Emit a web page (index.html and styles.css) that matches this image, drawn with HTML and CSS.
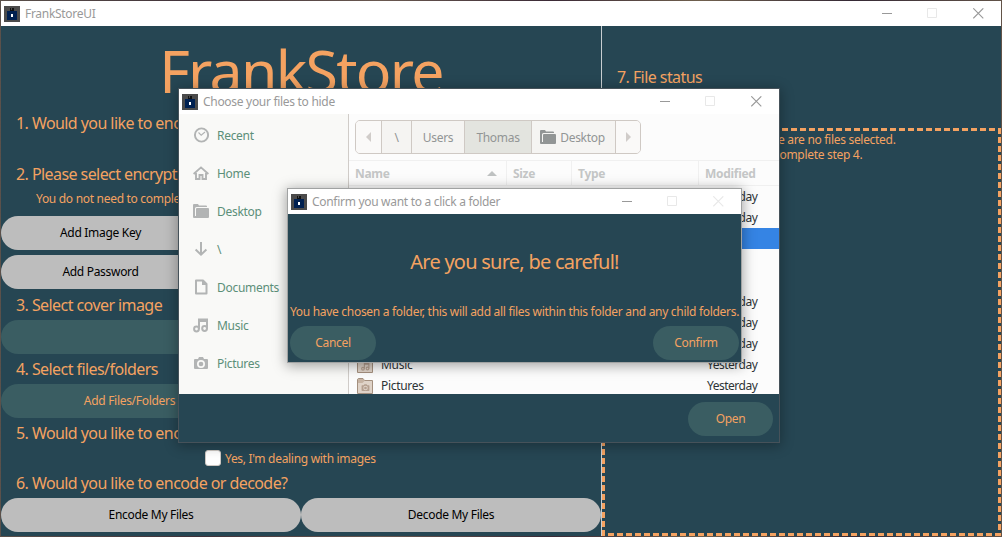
FILE: index.html
```html
<!DOCTYPE html>
<html lang="en">
<head>
<meta charset="utf-8">
<title>FrankStoreUI</title>
<link rel="stylesheet" href="styles.css">
</head>
<body>
<svg class="defs" aria-hidden="true">
  <symbol id="app" viewBox="0 0 16 16" shape-rendering="crispEdges"><path fill="#4b4b4b" d="M0 0h16v16H0z"/><path fill="#111" d="M6 2h1v3H6zM8 2h2v3H8z"/><path fill="#002050" d="M3 5h10v9H3z"/><path fill="#111" d="M6 4h4v1H6z"/><path fill="#fff" d="M7 8h2v3H7z"/></symbol>
  <symbol id="min" viewBox="0 0 11 11"><path d="M0 5.500h10" stroke="currentColor" fill="none"/></symbol>
  <symbol id="max" viewBox="0 0 11 11"><path d="M.5.5h9v9h-9z" stroke="#e8e8e8" fill="none"/></symbol>
  <symbol id="close" viewBox="0 0 11 11"><path d="M.3.3l10 10M10.300.3l-10 10" stroke="currentColor" fill="none" stroke-width="1.1"/></symbol>
  <symbol id="folder" viewBox="0 0 16 16"><path fill="currentColor" d="M0 2q0-1 1-1h4l1 1.500h7q1 0 1 1V4H3.500Q2 4 2 5.500V13h1V6q0-1 1-1h11q1 0 1 1v8q0 1-1 1H1q-1 0-1-1z"/></symbol>
  <symbol id="recent" viewBox="0 0 16 16"><circle cx="8.500" cy="8" r="6.600" fill="none" stroke="currentColor" stroke-width="1.900"/><path d="M5.500 5.500l2.700 2.700L12 5" fill="none" stroke="currentColor" stroke-width="1.100"/></symbol>
  <symbol id="home" viewBox="0 0 16 16"><path d="M.6 9L8 2.400 15.400 9M3 8v6h3.500v-4h3v4H13V8" fill="none" stroke="currentColor" stroke-width="1.900"/></symbol>
  <symbol id="down" viewBox="0 0 16 16"><path d="M8 1v12.500M2.600 8.500L8 13.700l5.400-5.200" fill="none" stroke="currentColor" stroke-width="2"/></symbol>
  <symbol id="doc" viewBox="0 0 16 16"><path d="M3 1.500h7L13.500 5v9.500H3z" fill="none" stroke="currentColor" stroke-width="2" stroke-linejoin="round"/><path d="M9 1l5 5H9z" fill="currentColor"/></symbol>
  <symbol id="music" viewBox="0 0 16 16"><path d="M6 12V2.500h8v9M6 4h8" fill="none" stroke="currentColor" stroke-width="2"/><circle cx="3.500" cy="12" r="2.400" fill="none" stroke="currentColor" stroke-width="2"/><circle cx="11.600" cy="11.500" r="2.400" fill="none" stroke="currentColor" stroke-width="2"/></symbol>
  <symbol id="camera" viewBox="0 0 16 16"><path fill="currentColor" fill-rule="evenodd" d="M2 4h3l1-2h4l1 2h3q1 0 1 1v8q0 1-1 1H2q-1 0-1-1V5q0-1 1-1zM8 5a4 4 0 1 0 0 8 4 4 0 0 0 0-8z"/><circle cx="8" cy="9" r="2.300" fill="currentColor"/></symbol>
  <symbol id="dir" viewBox="0 0 16 16"><path d="M.5 15.500V2q0-1.500 1.500-1.500h4L7.500 2.500h8v13z" fill="#dfd3c8" stroke="#a4907f"/><path d="M1 5V2q0-1 1-1h4l1.500 2-2 2z" fill="#c6b3a3"/></symbol>
</svg>

<main class="window app">
  <header class="bar"><svg class="logo"><use href="#app"/></svg><span>FrankStoreUI</span>
    <div class="ctl"><svg><use href="#min"/></svg><svg><use href="#max"/></svg><svg><use href="#close"/></svg></div></header>
  <div class="panes">
    <section class="steps">
      <h1>FrankStore</h1>
      <h2 class="q first">1. Would you like to encode?</h2>
      <h2 class="q">2. Please select encryption</h2>
      <p class="note">You do not need to complete both</p>
      <div class="btn light third gap6">Add Image Key</div>
      <div class="btn light third gap5">Add Password</div>
      <h2 class="q cover">3. Select cover image</h2>
      <div class="btn gap3"></div>
      <h2 class="q tight">4. Select files/folders</h2>
      <div class="btn half gap3">Add Files/Folders To Hide</div>
      <h2 class="q tight">5. Would you like to encode or decode using images?</h2>
      <label class="check"><i></i><span>Yes, I'm dealing with images</span></label>
      <h2 class="q tight">6. Would you like to encode or decode?</h2>
      <div class="pair gap3"><div class="btn light">Encode My Files</div><div class="btn light">Decode My Files</div></div>
    </section>
    <section class="status">
      <h2 class="q">7. File status</h2>
      <div class="drop"><p>Currently there are no files selected.</p><p>Please complete step 4.</p></div>
    </section>
  </div>
</main>

<section class="window chooser">
  <header class="bar"><svg class="logo"><use href="#app"/></svg><span>Choose your files to hide</span>
    <div class="ctl"><svg><use href="#min"/></svg><svg><use href="#max"/></svg><svg><use href="#close"/></svg></div></header>
  <div class="browse">
    <nav class="places">
      <a><svg><use href="#recent"/></svg>Recent</a>
      <a><svg><use href="#home"/></svg>Home</a>
      <a><svg><use href="#folder"/></svg>Desktop</a>
      <a><svg><use href="#down"/></svg>\</a>
      <a><svg><use href="#doc"/></svg>Documents</a>
      <a><svg><use href="#music"/></svg>Music</a>
      <a><svg><use href="#camera"/></svg>Pictures</a>
    </nav>
    <div class="files">
      <div class="path"><b class="arrow left"></b><b>\</b><b>Users</b><b class="on">Thomas</b><b><svg><use href="#folder"/></svg>Desktop</b><b class="arrow right"></b></div>
      <div class="row head"><span>Name<i class="sort"></i></span><span>Size</span><span>Type</span><span>Modified</span></div>
      <div class="list">
        <div class="row"><span><svg><use href="#dir"/></svg></span><span></span><span></span><span>Yesterday</span></div>
        <div class="row"><span></span><span></span><span></span><span>Yesterday</span></div>
        <div class="row sel"></div>
        <div class="row"></div>
        <div class="row"></div>
        <div class="row"><span></span><span></span><span></span><span>Yesterday</span></div>
        <div class="row"><span></span><span></span><span></span><span>Yesterday</span></div>
        <div class="row"><span></span><span></span><span></span><span>Yesterday</span></div>
        <div class="row"><span><svg class="ico"><use href="#dir"/><use href="#music" x="4" y="5" width="9" height="9"/></svg>Music</span><span></span><span></span><span>Yesterday</span></div>
        <div class="row"><span><svg class="ico"><use href="#dir"/><use href="#camera" x="4" y="5" width="9" height="9"/></svg>Pictures</span><span></span><span></span><span>Yesterday</span></div>
      </div>
    </div>
  </div>
  <footer><div class="btn open">Open</div></footer>
</section>

<section class="window confirm">
  <header class="bar"><svg class="logo"><use href="#app"/></svg><span>Confirm you want to a click a folder</span>
    <div class="ctl"><svg><use href="#min"/></svg><svg><use href="#max"/></svg><svg class="off"><use href="#close"/></svg></div></header>
  <h3>Are you sure, be careful!</h3>
  <p class="msg">You have chosen a folder, this will add all files within this folder and any child folders.</p>
  <div class="actions"><div class="btn">Cancel</div><div class="btn">Confirm</div></div>
</section>
</body>
</html>
```
FILE: styles.css
```css
* { box-sizing: border-box; }
body {
  margin: 0; width: 1002px; height: 537px; overflow: hidden; position: relative;
  background: linear-gradient(90deg, #5b514b, #403139 20%, #6a5950 38%, #3b2a36 55%, #70604e 70%, #352935 85%, #625348);
  font: 12px/15px "Noto Sans", "Open Sans", sans-serif; letter-spacing: -.3px; color: #f4a261;
}
h1, h2, h3, p { margin: 0; font-weight: 400; }
.defs { position: absolute; width: 0; height: 0; }
.window { position: absolute; background: #264653; display: flex; flex-direction: column; }
.app { left: 1px; top: 1px; width: 1000px; height: 535px; }
.chooser { left: 179px; top: 89px; width: 600px; height: 353px; box-shadow: 0 0 0 1px #46525a, 0 2px 12px 2px rgba(0,0,0,.3); }
.confirm { left: 288px; top: 189px; width: 453px; height: 173px; box-shadow: 0 0 0 1px #a0a2a2, 0 2px 12px 2px rgba(0,0,0,.35); }

.bar { height: 25px; flex: none; background: #fff; color: #999; display: flex; align-items: center; padding: 0 17px 0 3px; }
.bar .logo { width: 16px; height: 16px; margin-right: 5px; }
.ctl { margin-left: auto; display: flex; gap: 34px; }
.ctl svg { width: 11px; height: 11px; }
.ctl svg:last-child { margin-left: 1px; }
.ctl .off { color: #e8e8e8; }

.panes { flex: 1; display: flex; }
.steps { width: 601px; border-right: 1px solid #c8ced1; display: flex; flex-direction: column; }
h1 { font-size: 59px; line-height: 85px; height: 85px; padding-top: 2px; text-align: center; letter-spacing: -1.7px; }
.q { font-size: 16px; line-height: 24px; height: 24px; padding-left: 15px; white-space: nowrap; letter-spacing: -.57px; }
.first { margin-bottom: 27px; }
.note { height: 24px; line-height: 25px; padding-left: 35px; }
.btn { height: 34px; flex: none; border-radius: 17px; background: #3a5d62; text-align: center; line-height: 34px; }
.light { background: #bdbdbd; color: #000; }
.third { width: 199px; }
.half { width: 300px; }
.gap6 { margin-top: 6px; }
.gap5 { margin-top: 5px; }
.gap3, .tight { margin-top: 3px; }
.cover { margin-top: 4px; }
.check { height: 20px; margin-top: 3px; padding-left: 204px; display: flex; align-items: center; gap: 4px; }
.check i { width: 16px; height: 16px; border-radius: 3px; background: #fff; border: 1px solid #cdc7c2; }
.pair { display: flex; }
.pair .btn { flex: 1; }
.status { flex: 1; display: flex; flex-direction: column; padding-top: 39px; }
.drop {
  margin-top: 39px; flex: 1; padding: 4px 4px 0 0; text-align: center;
  background:
    repeating-linear-gradient(90deg, #f4a261 0 6px, transparent 6px 9px) 0 0 / 100% 3px no-repeat,
    repeating-linear-gradient(90deg, #f4a261 0 3px, transparent 3px 6px, #f4a261 6px 9px) 0 100% / 100% 3px no-repeat,
    repeating-linear-gradient(180deg, #f4a261 0 3px, transparent 3px 6px, #f4a261 6px 9px) 0 0 / 3px 100% no-repeat,
    repeating-linear-gradient(180deg, #f4a261 0 6px, transparent 6px 9px) 100% 0 / 3px 100% no-repeat;
}

.browse { height: 280px; display: flex; overflow: hidden; }
.places { width: 170px; background: #f9f9f7; border-right: 1px solid #d0ccc8; padding-top: 2px; color: #5c8f79; }
.places a { height: 38px; display: flex; align-items: center; padding-left: 14px; gap: 8px; }
.places svg { width: 16px; height: 16px; color: #b2b4b4; }
.files { flex: 1; background: #fcfcfc; }
.path { display: flex; width: 286px; height: 34px; margin: 6px; border: 1px solid #cfc9c4; border-radius: 5px; overflow: hidden; background: #f5f4f2; color: #929595; }
.path b { font-weight: 400; display: flex; align-items: center; justify-content: center; border-left: 1px solid #cfc9c4; width: 53px; }
.path b:first-child { width: 25px; border: 0; background: #faf9f8; }
.path b:nth-child(2) { width: 30px; }
.path .on { width: 67px; background: #e3e4df; }
.path b:nth-child(5) { width: 84px; gap: 4px; padding-right: 2px; }
.path b:last-child { width: 25px; background: #faf9f8; }
.path svg { width: 16px; height: 16px; }
.arrow::before { content: ""; border: 5px solid transparent; }
.left::before { border-right-color: #d0ccc9; border-left-width: 0; }
.right::before { border-left-color: #d0ccc9; border-right-width: 0; }
.row { display: grid; grid-template-columns: 158px 65px 127px 80px; height: 21px; align-items: center; color: #2e3436; }
.row span { padding-left: 8px; display: flex; align-items: center; gap: 8px; }
.list .row span:last-child { letter-spacing: -.5px; }
.row svg { width: 16px; height: 16px; color: #b49f8f; }
.head { height: 26px; border: solid #f0f0f0; border-width: 1px 0; align-items: stretch; color: #c4c6c6; font-weight: 700; }
.head span { padding-left: 6px; border-right: 1px solid #f0f0f0; }
.head span:last-child { border: 0; }
.head .sort { margin-left: auto; margin-right: 9px; border: 5px solid transparent; border-top: 0; border-bottom-color: #bfc2c2; }
.sel { background: #3584e4; }
footer { display: flex; justify-content: flex-end; padding: 8px 6px 0; }
.open { width: 85px; }

h3 { margin-top: 33px; height: 30px; font-size: 20px; line-height: 30px; text-align: center; letter-spacing: -.75px; }
.msg { margin-top: 27px; height: 15px; text-align: center; white-space: nowrap; }
.actions { display: flex; justify-content: space-between; padding: 7px 2px 0; }
.actions .btn { width: 86px; }
```
